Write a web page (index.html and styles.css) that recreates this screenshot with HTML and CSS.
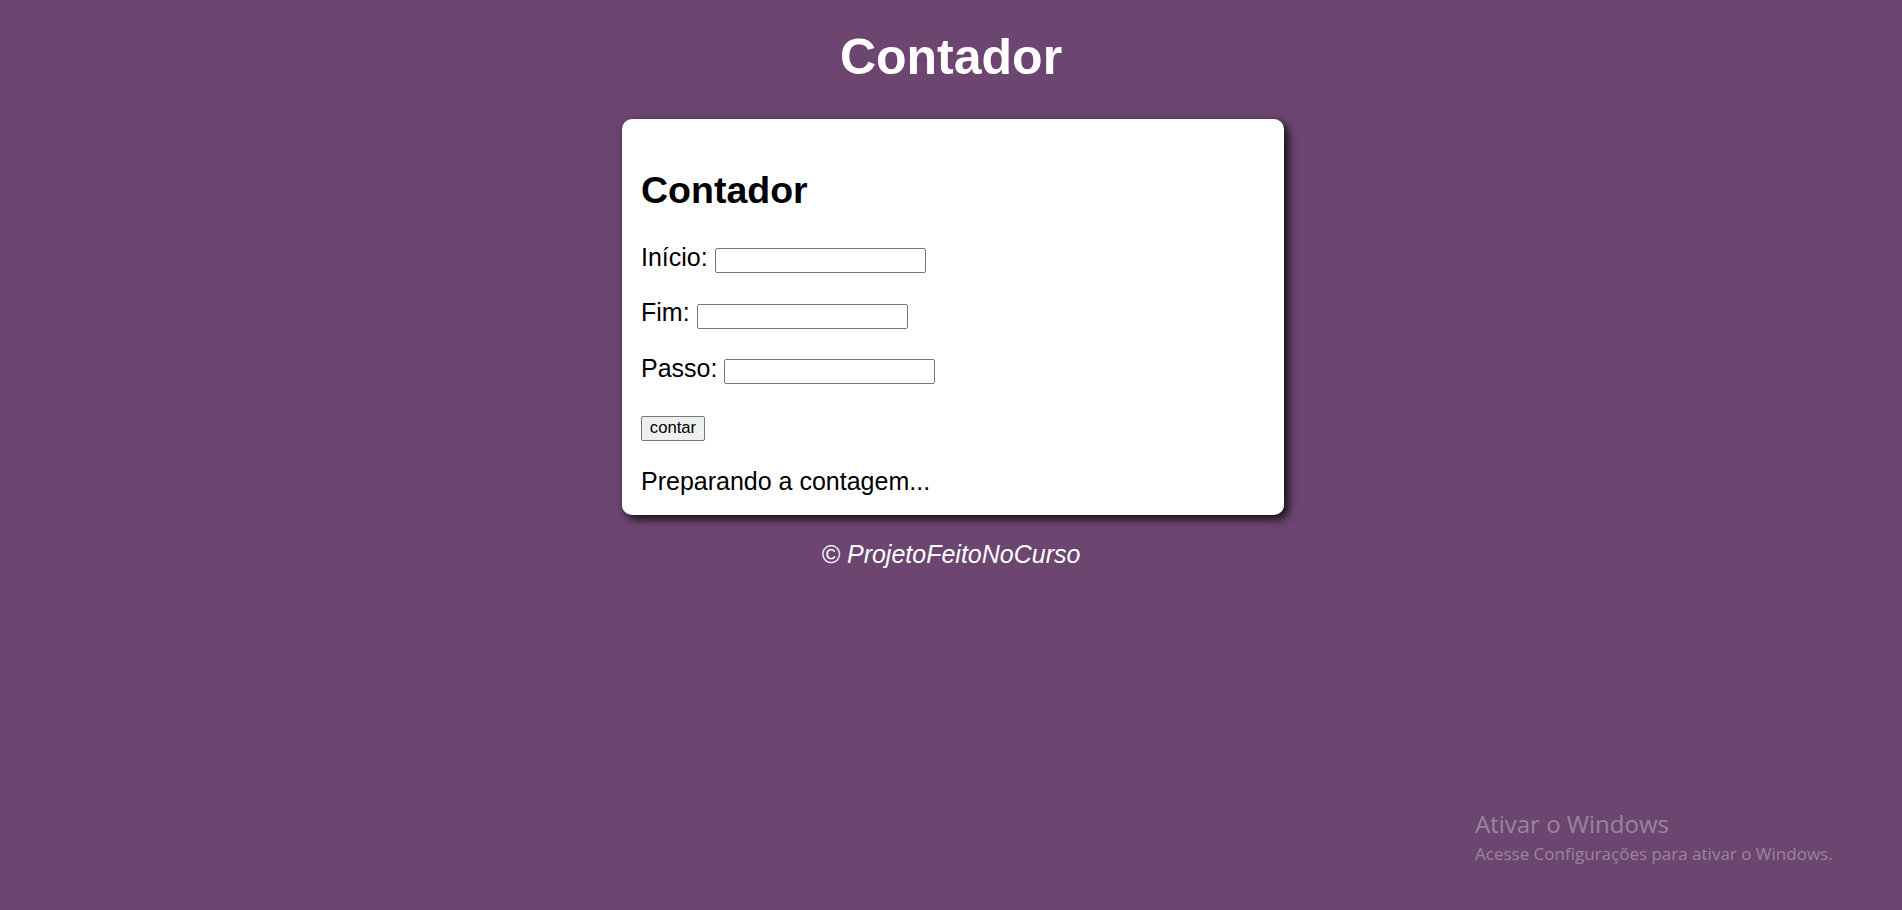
FILE: index.html
```html
<!DOCTYPE html>
<html lang="pt-BR">
<head>
<meta charset="utf-8">
<title>Contador</title>
<link rel="stylesheet" href="styles.css">
</head>
<body>
<header class="header">
  <h1 class="title">Contador</h1>
</header>
<section class="card">
  <h2 class="card-title">Contador</h2>
  <p class="field">Início: <input type="text" class="input"></p>
  <p class="field">Fim: <input type="text" class="input"></p>
  <p class="field">Passo: <input type="text" class="input"></p>
  <p class="field field-btn"><input type="button" class="btn" value="contar"></p>
  <div class="result">Preparando a contagem...</div>
</section>
<footer class="footer">
  <p class="footer-text">© ProjetoFeitoNoCurso</p>
</footer>
<div class="watermark">
  <div class="wm-title">Ativar o Windows</div>
  <div class="wm-sub">Acesse Configurações para ativar o Windows.</div>
</div>
</body>
</html>
```
FILE: styles.css
```css
html, body {
  margin: 0;
  padding: 0;
}
body {
  background: #6c4570;
  font-family: "Liberation Sans", Arial, sans-serif;
  font-size: 25px;
  color: #000;
  min-height: 910px;
  position: relative;
  overflow: hidden;
}
.header {
  padding-top: 28px;
}
.title {
  margin: 0 0 32.5px;
  text-align: center;
  color: #fff;
  font-size: 50px;
  font-weight: bold;
}
.card {
  width: 624px;
  margin: 0 auto;
  padding: 19px;
  background: #fff;
  border-radius: 10px;
  box-shadow: 4px 4px 10px rgba(0, 0, 0, 0.85);
  position: relative;
  left: 2px;
}
.card-title {
  font-size: 37.5px;
  font-weight: bold;
  margin: 31px 0;
}
.field {
  margin: 25px 0;
}
.field-btn {
  margin-top: 26px;
}
.input {
  width: 211px;
  height: 25px;
  box-sizing: border-box;
  border: 1px solid #767676;
  border-radius: 2px;
  padding: 1px 2px;
  font-family: "Liberation Sans", Arial, sans-serif;
  font-size: 16.67px;
  vertical-align: baseline;
}
.btn {
  width: 64px;
  height: 25px;
  box-sizing: border-box;
  border: 1px solid #767676;
  border-radius: 2px;
  background: #efefef;
  font-family: "Liberation Sans", Arial, sans-serif;
  font-size: 16.67px;
  color: #000;
  padding: 0 6px;
}
.result {
  margin: 0;
  padding-top: 1px;
}
.footer {
  text-align: center;
}
.footer-text {
  margin: 25px 0;
  color: #fff;
  font-style: italic;
}
.watermark {
  position: absolute;
  left: 1475px;
  top: 809px;
  color: #9a859c;
  font-family: "Open Sans", "Noto Sans", sans-serif;
}
.wm-title {
  font-size: 24px;
  line-height: 30px;
  margin-bottom: 3px;
}
.wm-sub {
  font-size: 17px;
  line-height: 24px;
}
```
